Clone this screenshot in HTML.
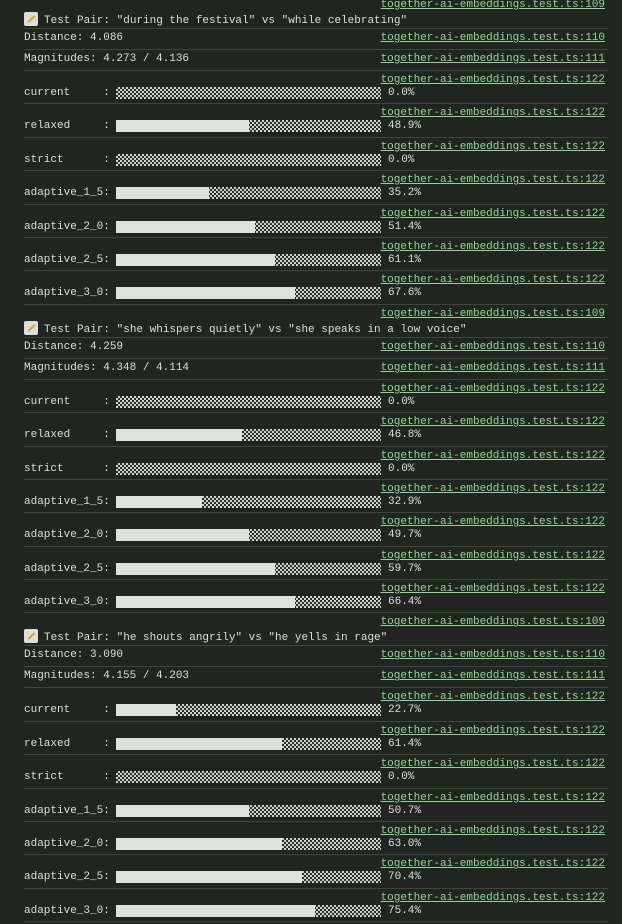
<!DOCTYPE html>
<html><head><meta charset="utf-8"><style>
html,body{margin:0;padding:0;background:#212520;width:622px;height:924px;overflow:hidden}
body{font-family:"Liberation Mono","DejaVu Sans Mono",monospace;font-size:11px;color:#dcdfd8}
#c{position:absolute;top:-4px;left:24px;width:584px}
.r{border-bottom:1px solid #3c463b;box-sizing:border-box;position:relative}
.h{height:33px}.s{height:21px}.b{height:33.4px}
.l{position:absolute;right:3px;top:3px;line-height:13px;color:#93d493;text-decoration:underline;white-space:pre}
.s .l{top:3px}
.t{position:absolute;left:0;top:16px;line-height:13px;white-space:pre}
.s .t{top:3px}
.bar{position:absolute;left:92px;top:16px;width:265px;height:12px;background:repeating-conic-gradient(#cfd2ca 0 25%,#2a2e29 0 50%) 0 0/4px 4px}
.bar i{display:block;height:12px;background:#dfe2da}
.p{position:absolute;left:364px;top:16px;line-height:13px}
.e{display:inline-block;width:14px;height:14px;background:#ddd;border-radius:2px;vertical-align:-3px;margin-right:6px;position:relative}
.e:after{content:"";position:absolute;left:3px;top:6px;width:9px;height:2px;background:#e0a020;transform:rotate(-45deg)}
</style></head><body><div id="c">
<div class="r h"><span class="l">together-ai-embeddings.test.ts:109</span><span class="t"><span class="e"></span>Test Pair: "during the festival" vs "while celebrating"</span></div>
<div class="r s"><span class="l">together-ai-embeddings.test.ts:110</span><span class="t">Distance: 4.086</span></div>
<div class="r s"><span class="l">together-ai-embeddings.test.ts:111</span><span class="t">Magnitudes: 4.273 / 4.136</span></div>
<div class="r b"><span class="l">together-ai-embeddings.test.ts:122</span><span class="t">current     :</span><div class="bar"><i style="width:0"></i></div><span class="p">0.0%</span></div>
<div class="r b"><span class="l">together-ai-embeddings.test.ts:122</span><span class="t">relaxed     :</span><div class="bar"><i style="width:132.5px"></i></div><span class="p">48.9%</span></div>
<div class="r b"><span class="l">together-ai-embeddings.test.ts:122</span><span class="t">strict      :</span><div class="bar"><i style="width:0"></i></div><span class="p">0.0%</span></div>
<div class="r b"><span class="l">together-ai-embeddings.test.ts:122</span><span class="t">adaptive_1_5:</span><div class="bar"><i style="width:92.75px"></i></div><span class="p">35.2%</span></div>
<div class="r b"><span class="l">together-ai-embeddings.test.ts:122</span><span class="t">adaptive_2_0:</span><div class="bar"><i style="width:139px"></i></div><span class="p">51.4%</span></div>
<div class="r b"><span class="l">together-ai-embeddings.test.ts:122</span><span class="t">adaptive_2_5:</span><div class="bar"><i style="width:159px"></i></div><span class="p">61.1%</span></div>
<div class="r b"><span class="l">together-ai-embeddings.test.ts:122</span><span class="t">adaptive_3_0:</span><div class="bar"><i style="width:179px"></i></div><span class="p">67.6%</span></div>

<div class="r h"><span class="l">together-ai-embeddings.test.ts:109</span><span class="t"><span class="e"></span>Test Pair: "she whispers quietly" vs "she speaks in a low voice"</span></div>
<div class="r s"><span class="l">together-ai-embeddings.test.ts:110</span><span class="t">Distance: 4.259</span></div>
<div class="r s"><span class="l">together-ai-embeddings.test.ts:111</span><span class="t">Magnitudes: 4.348 / 4.114</span></div>
<div class="r b"><span class="l">together-ai-embeddings.test.ts:122</span><span class="t">current     :</span><div class="bar"><i style="width:0"></i></div><span class="p">0.0%</span></div>
<div class="r b"><span class="l">together-ai-embeddings.test.ts:122</span><span class="t">relaxed     :</span><div class="bar"><i style="width:126px"></i></div><span class="p">46.8%</span></div>
<div class="r b"><span class="l">together-ai-embeddings.test.ts:122</span><span class="t">strict      :</span><div class="bar"><i style="width:0"></i></div><span class="p">0.0%</span></div>
<div class="r b"><span class="l">together-ai-embeddings.test.ts:122</span><span class="t">adaptive_1_5:</span><div class="bar"><i style="width:86px"></i></div><span class="p">32.9%</span></div>
<div class="r b"><span class="l">together-ai-embeddings.test.ts:122</span><span class="t">adaptive_2_0:</span><div class="bar"><i style="width:132.5px"></i></div><span class="p">49.7%</span></div>
<div class="r b"><span class="l">together-ai-embeddings.test.ts:122</span><span class="t">adaptive_2_5:</span><div class="bar"><i style="width:159px"></i></div><span class="p">59.7%</span></div>
<div class="r b"><span class="l">together-ai-embeddings.test.ts:122</span><span class="t">adaptive_3_0:</span><div class="bar"><i style="width:179px"></i></div><span class="p">66.4%</span></div>

<div class="r h"><span class="l">together-ai-embeddings.test.ts:109</span><span class="t"><span class="e"></span>Test Pair: "he shouts angrily" vs "he yells in rage"</span></div>
<div class="r s"><span class="l">together-ai-embeddings.test.ts:110</span><span class="t">Distance: 3.090</span></div>
<div class="r s"><span class="l">together-ai-embeddings.test.ts:111</span><span class="t">Magnitudes: 4.155 / 4.203</span></div>
<div class="r b"><span class="l">together-ai-embeddings.test.ts:122</span><span class="t">current     :</span><div class="bar"><i style="width:60px"></i></div><span class="p">22.7%</span></div>
<div class="r b"><span class="l">together-ai-embeddings.test.ts:122</span><span class="t">relaxed     :</span><div class="bar"><i style="width:166px"></i></div><span class="p">61.4%</span></div>
<div class="r b"><span class="l">together-ai-embeddings.test.ts:122</span><span class="t">strict      :</span><div class="bar"><i style="width:0"></i></div><span class="p">0.0%</span></div>
<div class="r b"><span class="l">together-ai-embeddings.test.ts:122</span><span class="t">adaptive_1_5:</span><div class="bar"><i style="width:132.5px"></i></div><span class="p">50.7%</span></div>
<div class="r b"><span class="l">together-ai-embeddings.test.ts:122</span><span class="t">adaptive_2_0:</span><div class="bar"><i style="width:166px"></i></div><span class="p">63.0%</span></div>
<div class="r b"><span class="l">together-ai-embeddings.test.ts:122</span><span class="t">adaptive_2_5:</span><div class="bar"><i style="width:186px"></i></div><span class="p">70.4%</span></div>
<div class="r b"><span class="l">together-ai-embeddings.test.ts:122</span><span class="t">adaptive_3_0:</span><div class="bar"><i style="width:199px"></i></div><span class="p">75.4%</span></div>
</div></body></html>
